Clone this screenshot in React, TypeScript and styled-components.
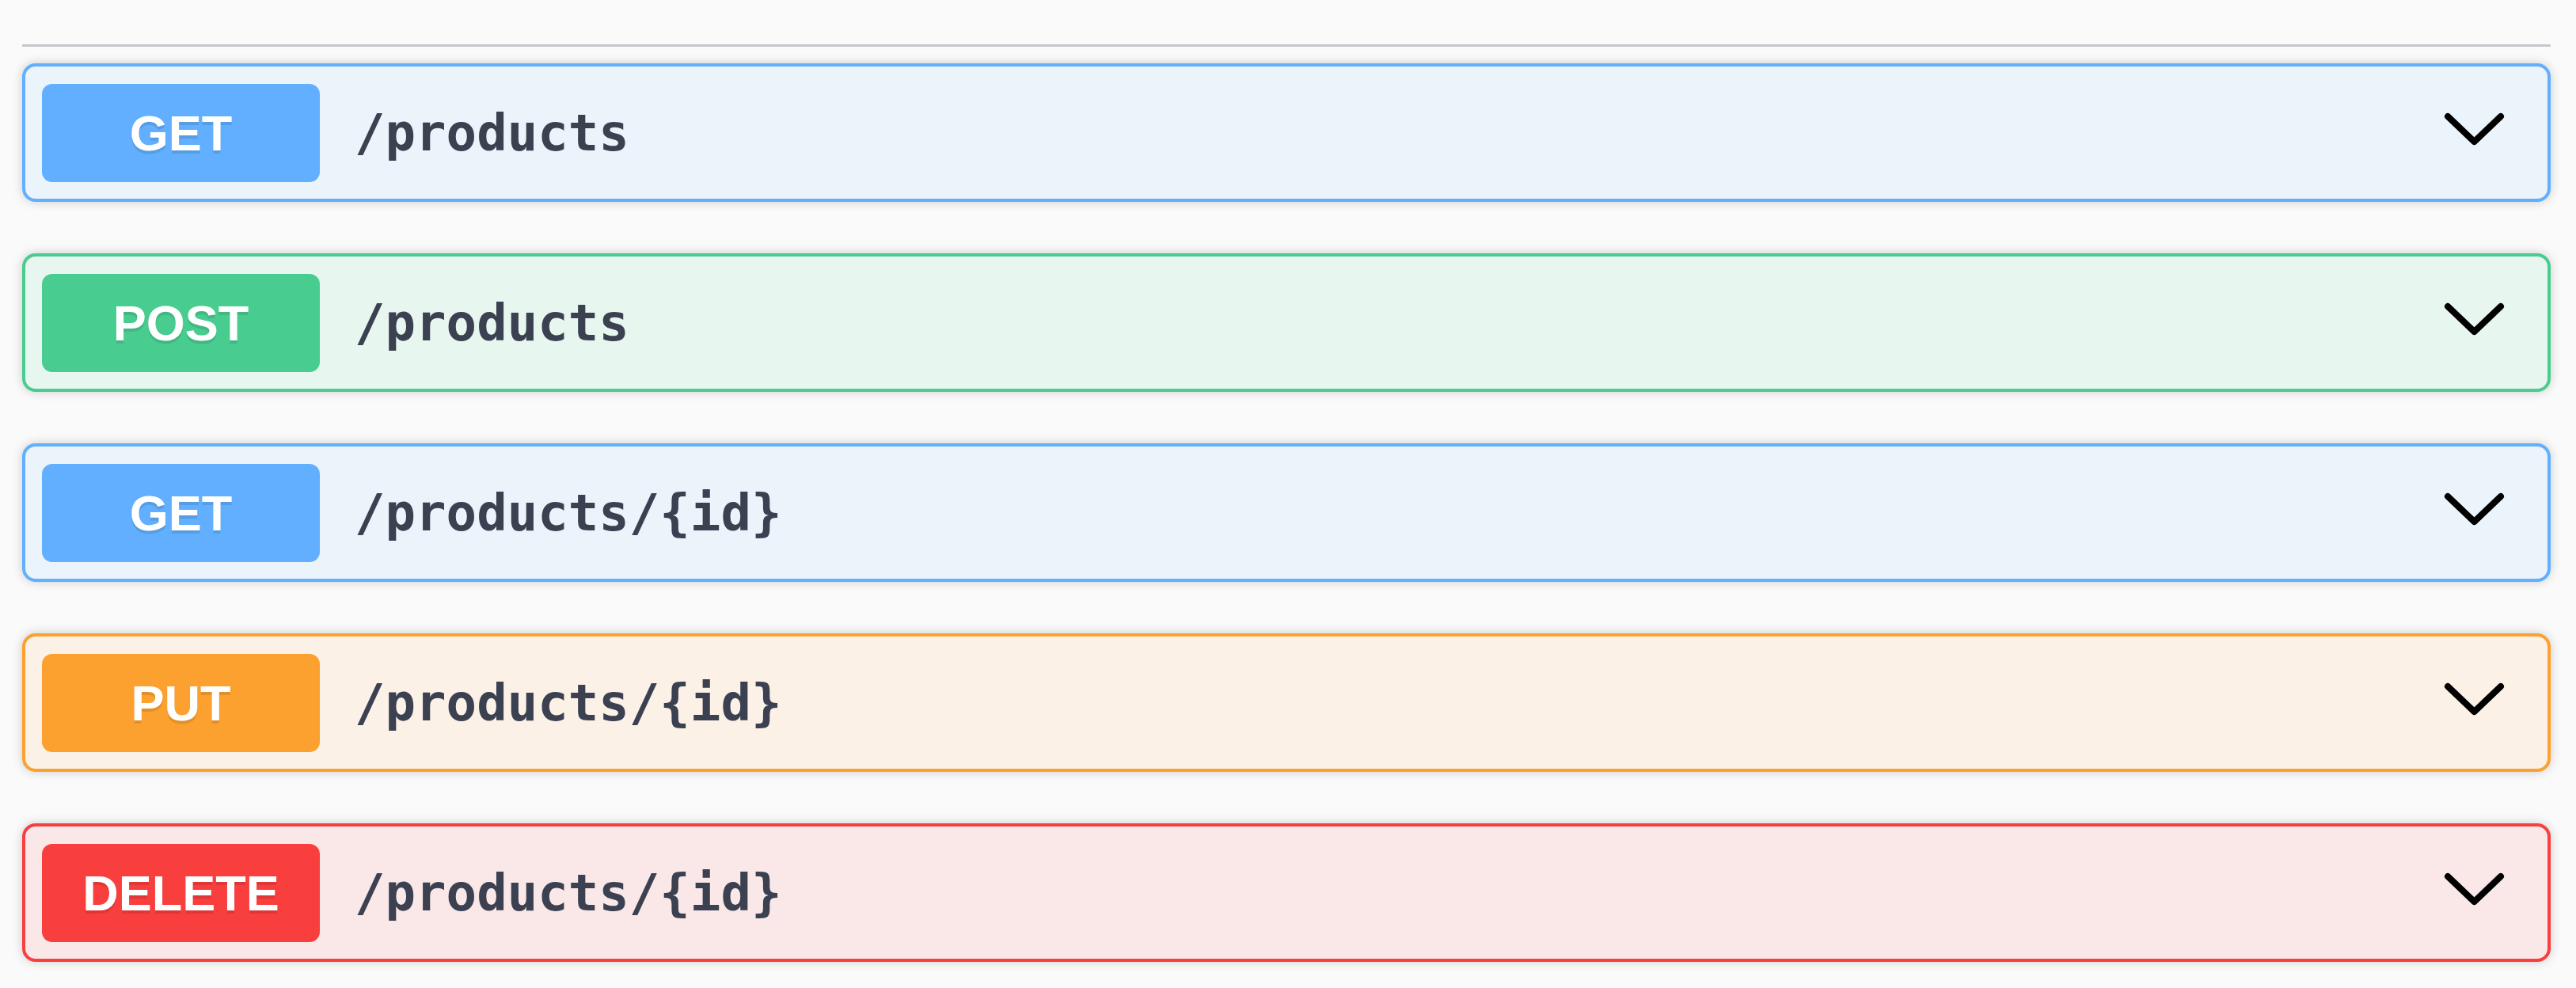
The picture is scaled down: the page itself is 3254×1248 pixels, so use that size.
import React from "react";
import styled, { createGlobalStyle } from "styled-components";

const GlobalStyle = createGlobalStyle`
  html, body {
    margin: 0;
    padding: 0;
    background: #fafafa;
  }
  body {
    font-family: "Liberation Sans", Arial, sans-serif;
  }
`;

type Method = "GET" | "POST" | "PUT" | "DELETE";

const palette: Record<Method, { main: string; bg: string }> = {
  GET: { main: "#61affe", bg: "#ebf3fb" },
  POST: { main: "#49cc90", bg: "#e8f6f0" },
  PUT: { main: "#fca130", bg: "#fbf1e6" },
  DELETE: { main: "#f93e3e", bg: "#fae7e7" },
};

const Page = styled.div`
  padding: 56px 32px 30px 28px;
`;

const Divider = styled.div`
  height: 3px;
  background: #c5c7cc;
  margin-bottom: 21px;
`;

const List = styled.div`
  display: flex;
  flex-direction: column;
  gap: 65px;
`;

const Block = styled.div<{ $method: Method }>`
  display: flex;
  align-items: center;
  height: 175px;
  box-sizing: border-box;
  padding: 0 49px 0 21px;
  border: 4px solid ${(p) => palette[p.$method].main};
  border-radius: 17px;
  background: ${(p) => palette[p.$method].bg};
  box-shadow: 0 0 13px rgba(0, 0, 0, 0.19);
`;

const Badge = styled.span<{ $method: Method }>`
  display: flex;
  align-items: center;
  justify-content: center;
  flex: 0 0 auto;
  width: 351px;
  height: 124px;
  border-radius: 13px;
  background: ${(p) => palette[p.$method].main};
  color: #fff;
  font-family: "Liberation Sans", Arial, sans-serif;
  font-weight: 700;
  font-size: 63px;
  text-shadow: 0 4px 0 rgba(0, 0, 0, 0.1);
`;

const Path = styled.span`
  flex: 1 1 auto;
  padding-left: 44px;
  font-family: "DejaVu Sans Mono", monospace;
  font-weight: 700;
  font-size: 64px;
  color: #3b4151;
`;

const Arrow = styled.svg`
  flex: 0 0 auto;
  width: 87px;
  height: 87px;
  margin-bottom: 15px;
`;

const Chevron = () => (
  <Arrow viewBox="0 0 87 87" aria-hidden="true">
    <polyline
      points="10,30 43.5,62 77,30"
      fill="none"
      stroke="#000"
      strokeWidth={8}
      strokeLinecap="round"
      strokeLinejoin="round"
    />
  </Arrow>
);

const ops: { method: Method; path: string }[] = [
  { method: "GET", path: "/products" },
  { method: "POST", path: "/products" },
  { method: "GET", path: "/products/{id}" },
  { method: "PUT", path: "/products/{id}" },
  { method: "DELETE", path: "/products/{id}" },
];

export default function App() {
  return (
    <>
      <GlobalStyle />
      <Page>
        <Divider />
        <List>
          {ops.map((op, i) => (
            <Block key={i} $method={op.method}>
              <Badge $method={op.method}>{op.method}</Badge>
              <Path>{op.path}</Path>
              <Chevron />
            </Block>
          ))}
        </List>
      </Page>
    </>
  );
}
